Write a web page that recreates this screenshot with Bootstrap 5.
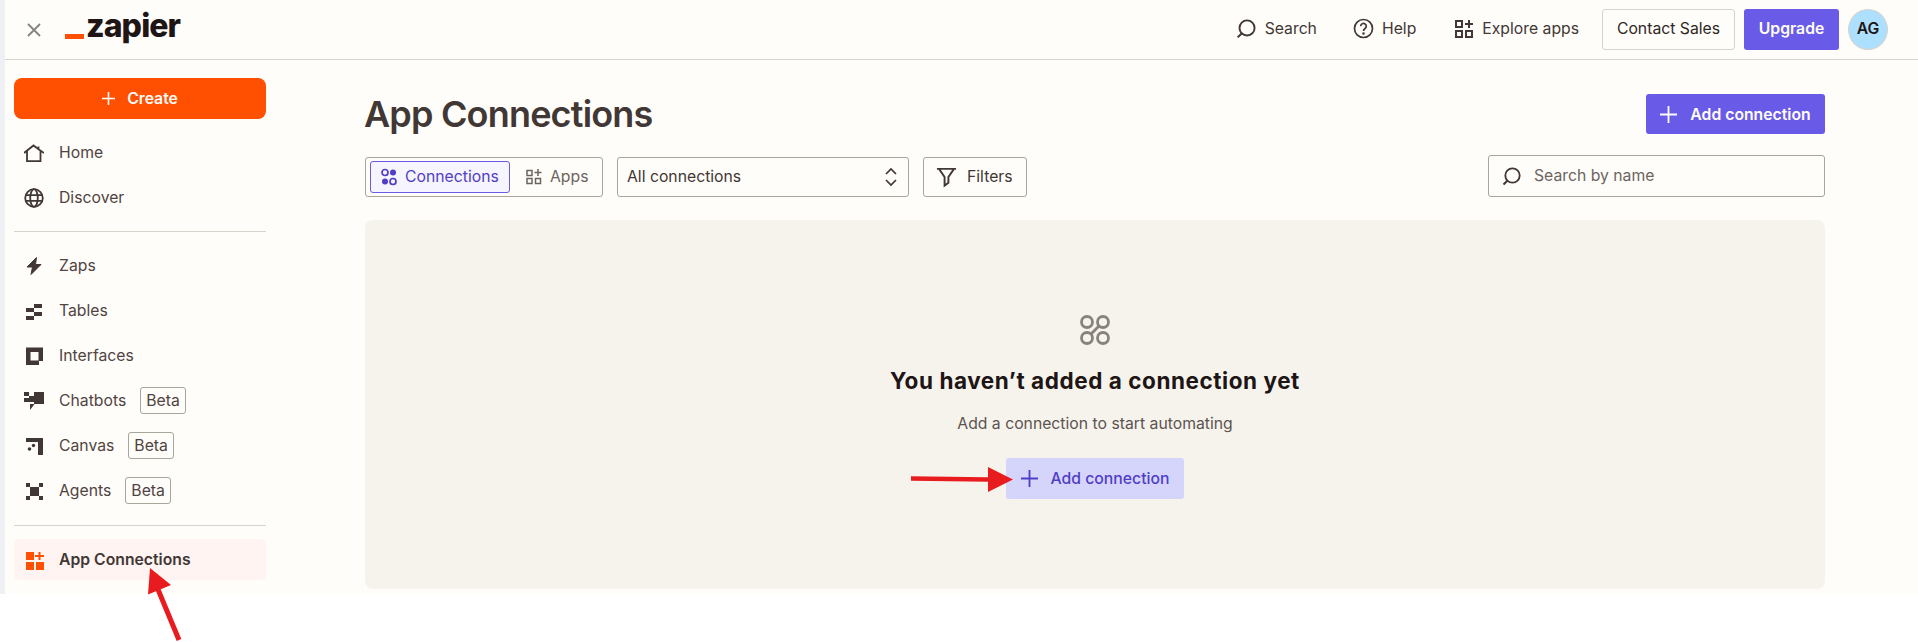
<!DOCTYPE html>
<html lang="en"><head><meta charset="utf-8"><title>App Connections</title>
<link href="https://cdn.jsdelivr.net/npm/bootstrap@5.3.0/dist/css/bootstrap.min.css" rel="stylesheet">
<style>
html,body{height:642px;overflow:hidden;background:#fff}
body{position:relative;font-family:Inter,"Liberation Sans",sans-serif;font-size:15.75px;color:#413735}
svg{flex:none;display:block}
.zframe{height:594px;overflow:hidden;background:#fffdf9;border-left:5px solid #eff0f3}
.ztop{height:60px;border-bottom:1px solid #d6d3ca;padding:0 30px 0 22px;flex:none}
.zclose{width:14px;height:14px}
.zlogo{margin-left:24px;flex:none}
.zbar{width:19px;height:5px;background:#ff4f00;margin-top:14px;flex:none}
.zword{font-weight:800;font-size:32px;line-height:1;letter-spacing:-.9px;color:#201515;margin-left:2px;margin-top:-7px;flex:none}
.ztoplink{color:#413735;gap:8px;margin-right:38px;font-size:15.75px;margin-bottom:2px}
.ztoplink.zfirst{margin-right:36px}
.zbtn{height:41px;border-radius:3px;font-size:15.75px;font-weight:500;display:flex;align-items:center;justify-content:center}
.zsales{width:133px;background:#fffdf9;border:1px solid #d6d3ca;color:#2f2725;font-weight:400;margin-left:-15px;padding-bottom:3px}
.zup,.zadd{background:#695be8;color:#fffdf9;font-weight:600;border:0}
.zup{width:95px;margin-left:9px;padding-bottom:2px}
.zava{width:40px;height:41px;border-radius:50%;background:#ade0ff;border:1px solid #d6d3ca;color:#201515;font-weight:600;margin-left:9px;font-size:15.75px;padding-bottom:1px}
.zside{width:270px;padding:18px 9px 0;flex:none}
.zcreate{height:41px;width:252px;background:#ff4f00;color:#fffdf9;border:0;border-radius:8px;font-weight:600;font-size:15.75px;gap:12px;margin-bottom:13px}
.zitem{height:41px;width:252px;margin-bottom:4px;padding-left:10px;gap:15px;border-radius:5px;color:#4f4442;font-size:15.75px}
.zitem svg{width:20px;height:20px}
.zitem.zon{background:#fff4f1;font-weight:600;color:#413735;margin-bottom:0}
.zlabel{gap:15px}
.zbeta{border:1px solid #a8a59b;border-radius:3px;padding:0 5px;height:27px;line-height:25px;margin-left:-1px}
.zrule{width:252px;border-top:1px solid #d6d3ca;margin:13px 0 13px}
.zrule.zlow{margin-top:14px}
.zmain{padding:0 93px 0 90px;flex:1;min-width:0}
.zhead{height:96px;padding-top:34px}
.ztitle{font-size:36px;font-weight:600;letter-spacing:-.82px;line-height:40px;margin:0 0 0 -1px;color:#413735}
.zadd{width:179px;height:40px;gap:13px;padding-top:2px}
.ztools{height:64px;padding-top:1px}
.zseg{width:238px;height:40px;border:1px solid #a8a59b;border-radius:3px;padding:3px 4px}
.zsegon{width:140px;height:32px;background:#f5f4ff;border:1px solid #695be8;border-radius:3px;color:#503ec4;gap:8px;padding-left:10px;flex:none}
.zsegoff{color:#6c6460;gap:8px;padding-left:16px}
.zsel{width:292px;height:40px;border:1px solid #a8a59b;border-radius:3px;margin-left:14px;padding:0 10px 0 9px;color:#413735}
.zfil{width:104px;height:40px;border:1px solid #a8a59b;border-radius:3px;margin-left:14px;gap:10px;padding-left:12px}
.zfind{width:337px;height:42px;border:1px solid #a8a59b;border-radius:3px;margin-top:-2px;gap:12px;padding-left:12px;color:#6c6460}
.zpanel{height:369px;background:#f6f3ed;border-radius:8px;padding-top:94px}
.zempty{font-size:22.5px;font-weight:700;letter-spacing:.55px;color:#201515;margin:19px 0 0;line-height:32px}
.zsub{margin:17px 0 0;font-size:15.75px;color:#5c5350;line-height:20px}
.zlight{width:178px;height:41px;background:#d5d5fc;color:#503ec4;font-weight:500;border:0;border-radius:3px;gap:13px;margin-top:24px;font-size:15.75px}
.zarrow{position:absolute;left:0;top:0;width:1918px;height:642px;pointer-events:none}
</style></head>
<body>
<div class="zframe d-flex flex-column">
  <header class="ztop d-flex align-items-center">
    <svg class="zclose" viewBox="0 0 14 14"><path d="M1 1l12 12M13 1L1 13" stroke="#878380" stroke-width="1.8" fill="none"/></svg>
    <div class="zlogo d-flex align-items-center"><span class="zbar"></span><span class="zword">zapier</span></div>
    <div class="ms-auto d-flex align-items-center">
      <a class="ztoplink zfirst d-flex align-items-center text-decoration-none" href="#"><svg width="22" height="22" viewBox="0 0 21 21" fill="none" stroke="#413735"><circle cx="11.5" cy="9.5" r="7.2" stroke-width="1.8"/><path d="M6.3 14.7L2.5 18.5" stroke-width="2"/></svg>Search</a>
      <a class="ztoplink d-flex align-items-center text-decoration-none" href="#"><svg width="21" height="21" viewBox="0 0 21 21" fill="none" stroke="#413735" stroke-width="1.7"><circle cx="10.5" cy="10.5" r="9"/><path d="M7.7 8.3a2.8 2.8 0 1 1 4.4 2.2c-1 .7-1.6 1.2-1.6 2.6"/><circle cx="10.5" cy="15.500" r=".5" fill="#413735"/></svg>Help</a>
      <a class="ztoplink d-flex align-items-center text-decoration-none" href="#"><svg width="20" height="20" viewBox="0 0 20 20" fill="none" stroke="#413735" stroke-width="2"><rect x="2" y="2" width="6" height="6"/><rect x="2" y="12" width="6" height="6"/><rect x="12" y="12" width="6" height="6"/><path d="M15 1v8M11 5h8"/></svg>Explore apps</a>
      <button class="zbtn zsales">Contact Sales</button>
      <button class="zbtn zup">Upgrade</button>
      <div class="zava d-flex align-items-center justify-content-center">AG</div>
    </div>
  </header>
  <div class="d-flex flex-grow-1">
    <nav class="zside">
      <button class="zcreate d-flex align-items-center justify-content-center"><svg width="13" height="13" viewBox="0 0 14 14"><path d="M7 0v14M0 7h14" stroke="#fffdf9" stroke-width="1.7"/></svg>Create</button>
      <a class="zitem d-flex align-items-center text-decoration-none" href="#"><svg viewBox="0 0 20 20" fill="none" stroke="#413735" stroke-width="1.8"><path d="M0 10L9.500 2.500l5 3.800V3.500M14.500 6.300L20 10M3 8v10.200h13.500V8"/></svg>Home</a>
      <a class="zitem d-flex align-items-center text-decoration-none" href="#"><svg viewBox="0 0 20 20" fill="none" stroke="#413735" stroke-width="1.8"><circle cx="10" cy="10" r="8.800"/><ellipse cx="10" cy="10" rx="3.800" ry="8.800"/><path d="M1.500 7.200h17M1.500 12.800h17"/></svg>Discover</a>
      <div class="zrule"></div>
      <a class="zitem d-flex align-items-center text-decoration-none" href="#"><svg viewBox="0 0 20 20" fill="#413735" stroke="#413735" stroke-width="1"><path d="M12.500 1.500L3 11H8.500L7 18.500 17 8.500H11.500z"/></svg>Zaps</a>
      <a class="zitem d-flex align-items-center text-decoration-none" href="#"><svg viewBox="0 0 20 20" fill="#413735"><path d="M10 3h8v4h-8zM2 7h8v4H2zM10 11h8v4h-8zM2 15h8v4H2z"/></svg>Tables</a>
      <a class="zitem d-flex align-items-center text-decoration-none" href="#"><svg viewBox="0 0 20 20" fill="#413735"><path fill-rule="evenodd" d="M2 1.500h17v13.500h-4v4H2zM6.500 6v8.500h8V6z"/></svg>Interfaces</a>
      <a class="zitem d-flex align-items-center text-decoration-none" href="#"><span class="zlabel d-flex align-items-center"><svg viewBox="0 0 20 20" fill="#413735"><path d="M10 1h10v12h-9.500L6 19v-6h4V11H0V7h5V5h5zM0 1h5v4H0z"/></svg>Chatbots</span><span class="zbeta">Beta</span></a>
      <a class="zitem d-flex align-items-center text-decoration-none" href="#"><span class="zlabel d-flex align-items-center"><svg viewBox="0 0 20 20" fill="#413735"><path d="M2 2h17v17h-5V6H2z"/><circle cx="9.500" cy="9.500" r="1.700"/><circle cx="5.500" cy="13" r="1.800"/></svg>Canvas</span><span class="zbeta">Beta</span></a>
      <a class="zitem d-flex align-items-center text-decoration-none" href="#"><span class="zlabel d-flex align-items-center"><svg viewBox="0 0 20 20" fill="#413735"><path d="M2 2h4v4H2zM15 2h4v4h-4zM2 15h4v4H2zM15 15h4v4h-4zM6 6h9v9H6z"/></svg>Agents</span><span class="zbeta">Beta</span></a>
      <div class="zrule zlow"></div>
      <a class="zitem zon d-flex align-items-center text-decoration-none" href="#"><svg viewBox="0 0 20 20" fill="#ff4f00"><path d="M2 2h8v8H2zM2 12h8v8H2zM12 12h8v8h-8z"/><path d="M14.500 2h2v3h3.500v2h-3.500v3h-2V7H11V5h3.500z"/></svg>App Connections</a>
    </nav>
    <main class="zmain">
      <div class="zhead d-flex justify-content-between align-items-start">
        <h1 class="ztitle">App Connections</h1>
        <button class="zbtn zadd"><svg width="17" height="17" viewBox="0 0 16 16"><path d="M8 0v16M0 8h16" stroke="#fffdf9" stroke-width="1.7"/></svg>Add connection</button>
      </div>
      <div class="ztools d-flex align-items-start">
        <div class="zseg d-flex align-items-center">
          <div class="zsegon d-flex align-items-center"><svg width="16" height="18" viewBox="0 0 16 18" fill="#503ec4"><circle cx="4" cy="4.500" r="3" fill="none" stroke="#503ec4" stroke-width="1.700"/><circle cx="12" cy="4.500" r="3"/><circle cx="4" cy="13.500" r="3"/><circle cx="12" cy="13.500" r="3" fill="none" stroke="#503ec4" stroke-width="1.700"/></svg>Connections</div>
          <div class="zsegoff d-flex align-items-center"><svg width="16" height="16" viewBox="0 0 16 16" fill="none" stroke="#6c6460" stroke-width="1.500"><rect x="1" y="1.500" width="5" height="5"/><rect x="1" y="9.500" width="5" height="5"/><rect x="9.500" y="9.500" width="5" height="5"/><path d="M12 0v7M8.500 3.500h7"/></svg>Apps</div>
        </div>
        <div class="zsel d-flex align-items-center justify-content-between">All connections<svg width="14" height="20" viewBox="0 0 14 20" fill="none" stroke="#413735" stroke-width="1.700"><path d="M2 7l5-5 5 5M2 13l5 5 5-5"/></svg></div>
        <div class="zfil d-flex align-items-center"><svg width="21" height="22" viewBox="0 0 22 22" fill="none" stroke="#413735" stroke-width="2"><path d="M1 2.500h20M3.500 3l5.500 8v9l4-3v-6l5.500-8"/></svg>Filters</div>
        <div class="zfind ms-auto d-flex align-items-center"><svg width="21" height="21" viewBox="0 0 21 21" fill="none" stroke="#413735"><circle cx="11.500" cy="9.500" r="7.200" stroke-width="1.800"/><path d="M6.300 14.700L2.500 18.500" stroke-width="2"/></svg>Search by name</div>
      </div>
      <section class="zpanel d-flex flex-column align-items-center">
        <svg width="32" height="32" viewBox="0 0 32 32" fill="none" stroke="#87827c" stroke-width="2.800"><circle cx="8" cy="8" r="5.500"/><circle cx="24" cy="8" r="5.500"/><circle cx="8" cy="24" r="5.500"/><circle cx="24" cy="24" r="5.500"/><path d="M12 20l8-8"/></svg>
        <h2 class="zempty">You haven’t added a connection yet</h2>
        <p class="zsub">Add a connection to start automating</p>
        <button class="zlight d-flex align-items-center justify-content-center"><svg width="17" height="17" viewBox="0 0 16 16"><path d="M8 0v16M0 8h16" stroke="#503ec4" stroke-width="1.700"/></svg>Add connection</button>
      </section>
    </main>
  </div>
</div>
<svg class="zarrow" viewBox="0 0 1918 642"><path d="M911 478.500L988 479.500" stroke="#e81c1f" stroke-width="4.500"/><path d="M988 467l25 12.500-25 12.500z" fill="#e81c1f"/><path d="M179 640L157 587" stroke="#e81c1f" stroke-width="5"/><path d="M150 568l21 17-23 9.500z" fill="#e81c1f"/></svg>
<script src="https://cdn.jsdelivr.net/npm/bootstrap@5.3.0/dist/js/bootstrap.bundle.min.js"></script>
</body></html>
